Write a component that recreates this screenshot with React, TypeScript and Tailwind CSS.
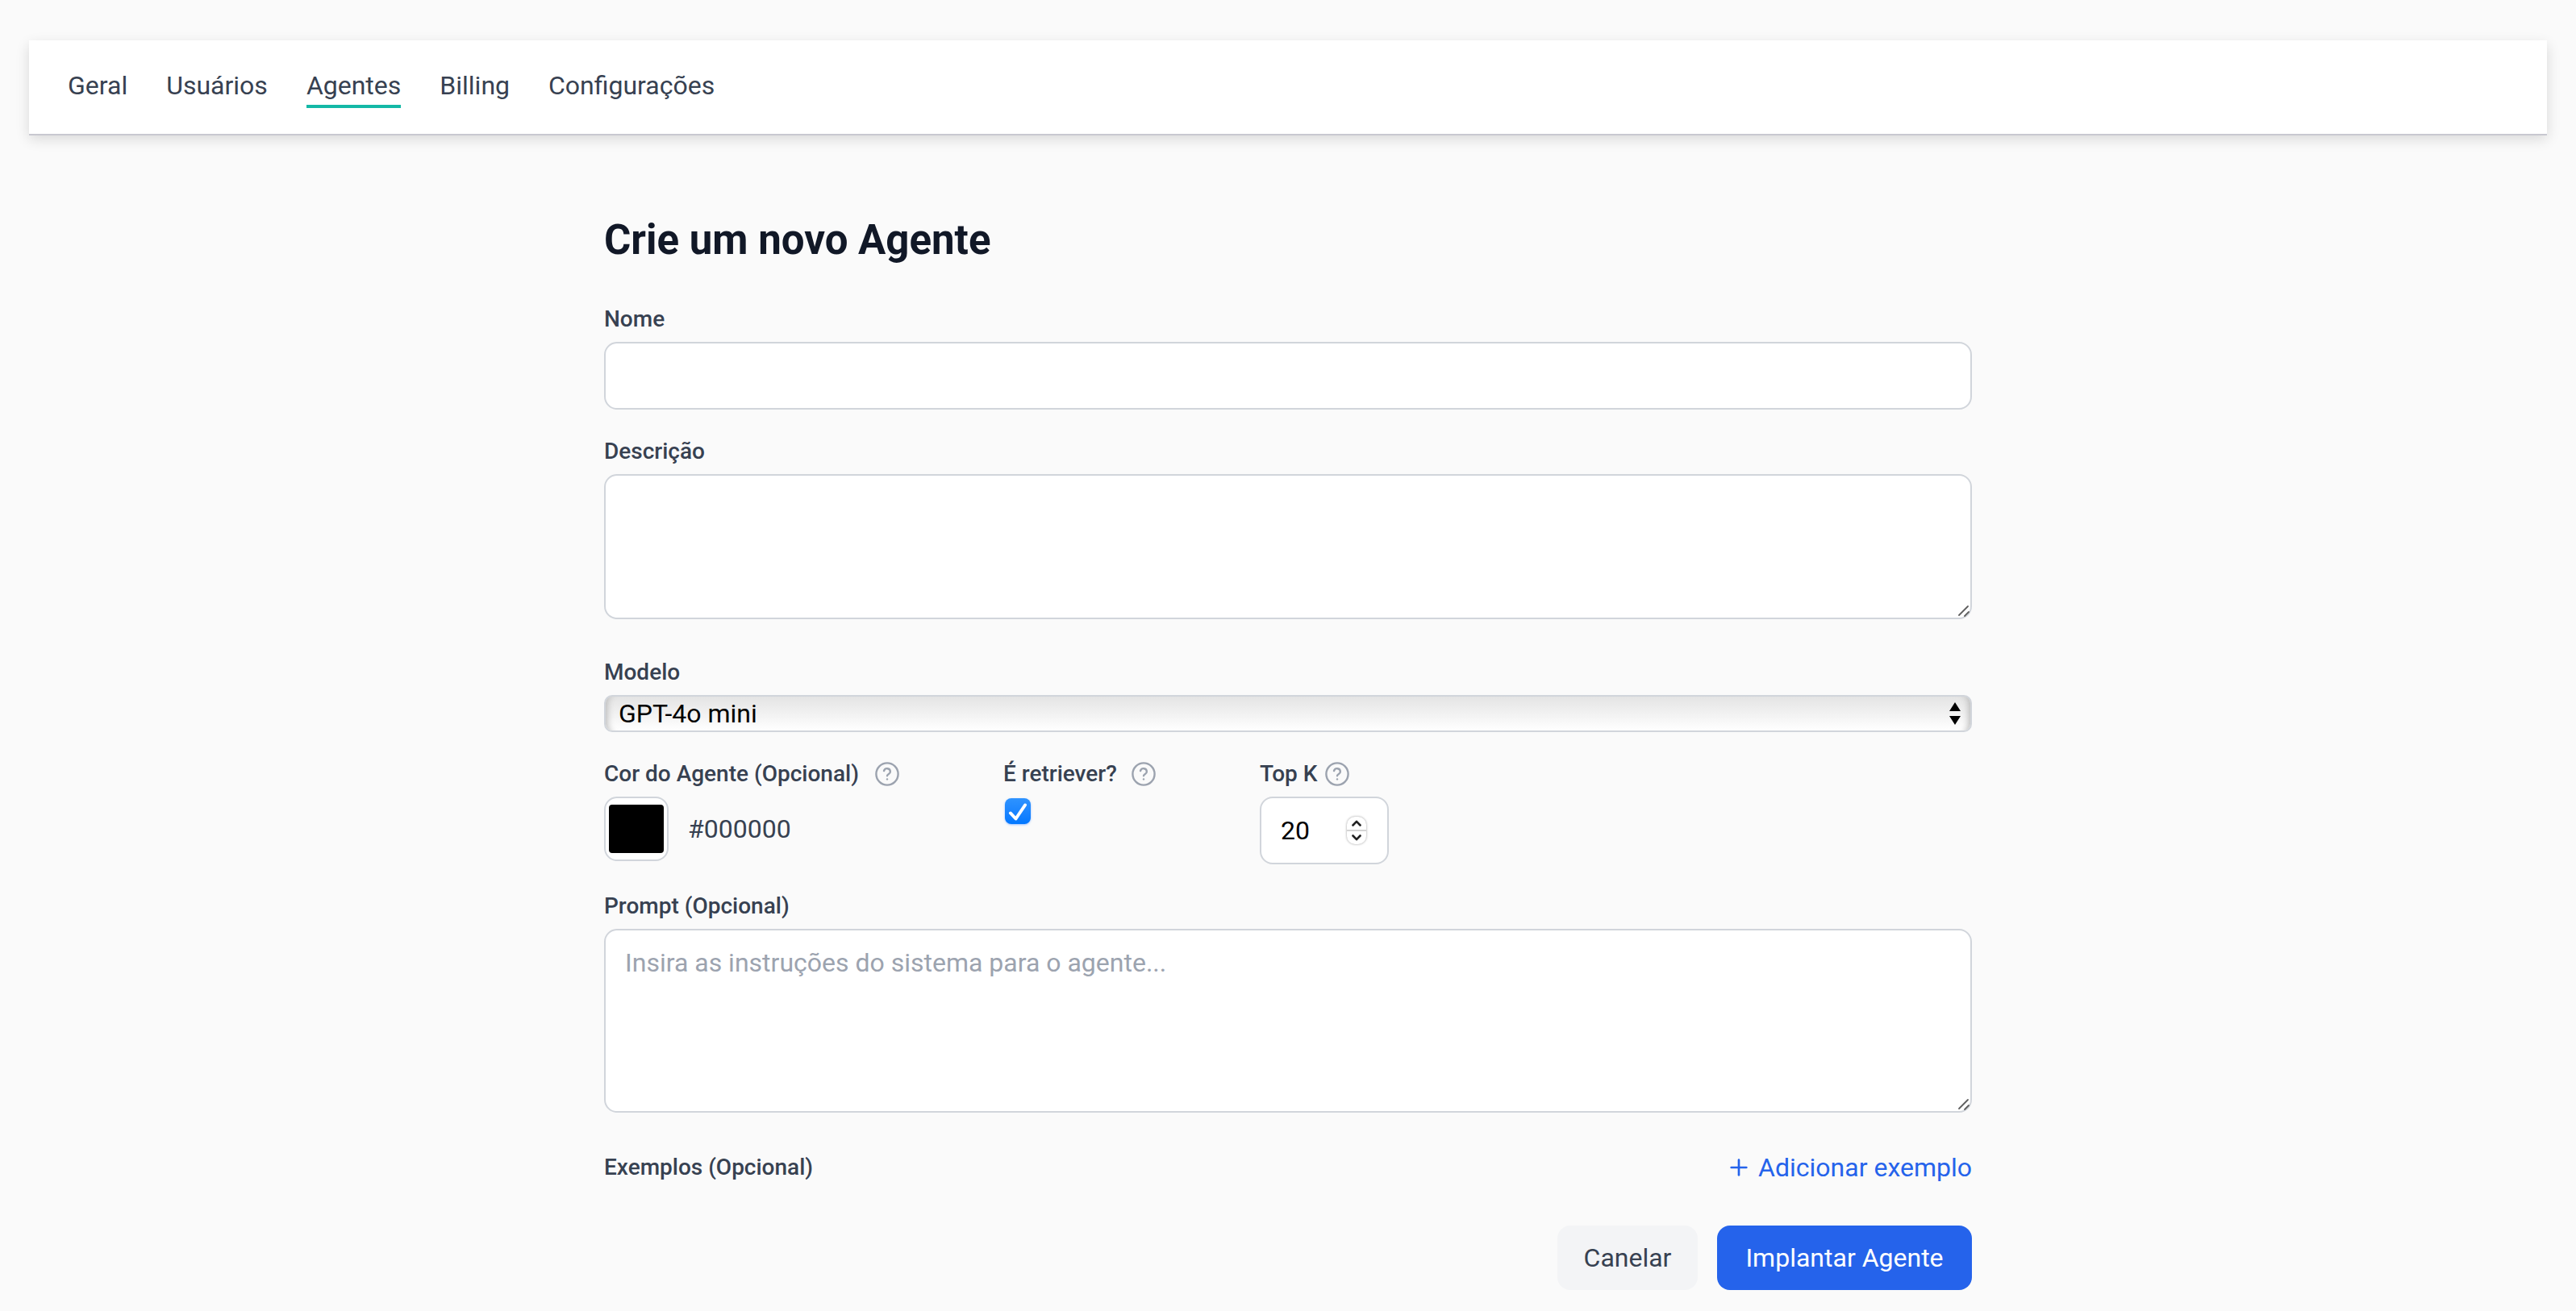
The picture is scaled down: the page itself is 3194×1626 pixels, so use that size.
import React, { useState } from 'react';
import { LuPlus } from 'react-icons/lu';

const tabs = ['Geral', 'Usuários', 'Agentes', 'Billing', 'Configurações'];

const labelClass = 'text-[28px] leading-10 font-medium text-[#374151]';
const fieldClass = 'block w-full rounded-2xl border-2 border-[#d1d5db] bg-white px-6 text-[32px] leading-[48px] text-black';

const HelpIcon: React.FC = () => (
  <svg className="size-8 shrink-0 text-[#9ca3af]" viewBox="0 0 24 24" fill="none" stroke="currentColor" strokeWidth="1.8" strokeLinecap="round" strokeLinejoin="round" aria-hidden="true">
    <circle cx="12" cy="12" r="10.2" />
    <path d="M9 9.1a3 3 0 0 1 5.9.8c0 2-2.9 2.4-2.9 3.7" />
    <path d="M12 16.8h.01" />
  </svg>
);

const ResizeGrip: React.FC = () => (
  <svg className="pointer-events-none absolute right-0.5 bottom-0.5 size-4 text-[#5f5f5f]" viewBox="0 0 16 16" fill="none" stroke="currentColor" strokeWidth="1.8" strokeLinecap="round" aria-hidden="true">
    <path d="M2 13 13 2M9 14l5-5" />
  </svg>
);

const App: React.FC = () => {
  const [form, setForm] = useState({
    name: '',
    description: '',
    model: 'gpt-4o-mini',
    color: '#000000',
    retriever: true,
    topK: 20,
    prompt: '',
  });

  const handleChange = (e: React.ChangeEvent<HTMLInputElement | HTMLTextAreaElement | HTMLSelectElement>) => {
    const { name, value } = e.target;
    setForm(prev => ({ ...prev, [name]: value }));
  };

  const stepTopK = (step: number) => setForm(prev => ({ ...prev, topK: Number(prev.topK) + step }));

  return (
    <div className="min-h-screen bg-[#fafafa] px-9 pt-[50px] pb-6 font-['Roboto',sans-serif]">
      <nav className="flex items-center gap-12 bg-white px-12 py-8 text-[32px] leading-[48px] text-[#374151] shadow-[0_2px_0_#c8c8d0,0_6px_16px_rgba(0,0,0,0.14)]">
        {tabs.map(tab => (
          <a key={tab} href="#" className={tab === 'Agentes' ? 'border-b-4 border-[#14b8a6]' : 'border-b-4 border-transparent'}>
            {tab}
          </a>
        ))}
      </nav>

      <form onSubmit={e => e.preventDefault()} className="mx-auto mt-24 max-w-[1696px]">
        <h1 className="text-[51px] leading-[72px] font-bold text-[#111827]">Crie um novo Agente</h1>

        <div className="mt-[42px]">
          <label htmlFor="name" className={`block ${labelClass}`}>Nome</label>
          <input type="text" id="name" name="name" value={form.name} onChange={handleChange} className={`mt-2 h-[84px] ${fieldClass}`} />
        </div>

        <div className="mt-8">
          <label htmlFor="description" className={`block ${labelClass}`}>Descrição</label>
          <div className="relative mt-2">
            <textarea id="description" name="description" value={form.description} onChange={handleChange} className={`h-[180px] resize-none py-4 ${fieldClass}`} />
            <ResizeGrip />
          </div>
        </div>

        <div className="mt-[46px]">
          <label htmlFor="model" className={`block ${labelClass}`}>Modelo</label>
          <div className="relative mt-2">
            <select
              id="model"
              name="model"
              value={form.model}
              onChange={handleChange}
              className="block h-[46px] w-full appearance-none rounded-[10px] border-2 border-[#d1d5db] bg-linear-to-b from-[#e4e4e4] to-white px-4 text-[32px] leading-10 text-black shadow-[inset_10px_0_8px_-8px_#b8b8b8,inset_-10px_0_8px_-8px_#b8b8b8]"
            >
              <option value="gpt-4o-mini">GPT-4o mini</option>
              <option value="gpt-4o">GPT-4o</option>
            </select>
            <svg className="pointer-events-none absolute top-2 right-3.5 h-[30px] w-3.5" viewBox="0 0 14 30" aria-hidden="true">
              <path d="M7 1l7 11H0zM7 29l7-11H0z" />
            </svg>
          </div>
        </div>

        <div className="mt-8 grid grid-cols-[495px_318px_160px]">
          <div>
            <div className="flex items-center gap-2">
              <label htmlFor="color" className={`min-w-[327px] ${labelClass}`}>Cor do Agente (Opcional)</label>
              <HelpIcon />
            </div>
            <div className="mt-2 flex items-center gap-6">
              <input
                type="color"
                id="color"
                name="color"
                value={form.color}
                onChange={handleChange}
                className="size-20 appearance-none rounded-2xl border-2 border-[#d1d5db] bg-white px-1 py-2 [&::-webkit-color-swatch]:rounded [&::-webkit-color-swatch]:border-0 [&::-webkit-color-swatch-wrapper]:p-0"
              />
              <span className="text-[32px] leading-[48px] text-[#374151]">{form.color}</span>
            </div>
          </div>

          <div>
            <div className="flex items-center gap-2">
              <label htmlFor="retriever" className={`min-w-[150px] ${labelClass}`}>É retriever?</label>
              <HelpIcon />
            </div>
            <div className="relative mt-2.5 ml-0.5 size-8">
              <input
                type="checkbox"
                id="retriever"
                checked={form.retriever}
                onChange={e => setForm(prev => ({ ...prev, retriever: e.target.checked }))}
                className="block size-8 appearance-none rounded-lg border border-[#d1d5db] bg-white shadow-sm checked:border-0 checked:bg-linear-to-b checked:from-[#2e93ff] checked:to-[#0077ff] checked:shadow-blue-500/40"
              />
              {form.retriever && (
                <svg className="pointer-events-none absolute inset-0 size-8" viewBox="0 0 32 32" fill="none" stroke="#fff" strokeWidth="4" strokeLinecap="round" strokeLinejoin="round" aria-hidden="true">
                  <path d="M7 18.5l6.5 7L25 8.5" />
                </svg>
              )}
            </div>
          </div>

          <div>
            <div className="flex items-center gap-2">
              <label htmlFor="topK" className={`min-w-[72px] ${labelClass}`}>Top K</label>
              <HelpIcon />
            </div>
            <div className="relative mt-2">
              <input type="number" id="topK" name="topK" value={form.topK} onChange={handleChange} className={`h-[84px] [appearance:textfield] ${fieldClass}`} />
              <div className="absolute inset-y-0 right-7 flex items-center">
                <div className="flex h-[34px] w-6 flex-col divide-y-2 divide-[#d4d4d4] rounded-[10px] bg-white shadow-[0_0_3px_rgba(0,0,0,0.4)]">
                  <button type="button" aria-label="Aumentar" onClick={() => stepTopK(1)} className="flex flex-1 items-center justify-center">
                    <svg className="h-2 w-3" viewBox="0 0 12 8" fill="none" stroke="#222" strokeWidth="2.6" strokeLinecap="round" strokeLinejoin="round"><path d="M1.5 6.5 6 1.8l4.5 4.7" /></svg>
                  </button>
                  <button type="button" aria-label="Diminuir" onClick={() => stepTopK(-1)} className="flex flex-1 items-center justify-center">
                    <svg className="h-2 w-3" viewBox="0 0 12 8" fill="none" stroke="#222" strokeWidth="2.6" strokeLinecap="round" strokeLinejoin="round"><path d="M1.5 1.5 6 6.2l4.5-4.7" /></svg>
                  </button>
                </div>
              </div>
            </div>
          </div>
        </div>

        <div className="mt-8">
          <label htmlFor="prompt" className={`block ${labelClass}`}>Prompt (Opcional)</label>
          <div className="relative mt-2">
            <textarea
              id="prompt"
              name="prompt"
              value={form.prompt}
              onChange={handleChange}
              placeholder="Insira as instruções do sistema para o agente..."
              className={`h-[228px] resize-none py-4 placeholder:text-[#9ca3af] ${fieldClass}`}
            />
            <ResizeGrip />
          </div>
        </div>

        <div className="mt-11 flex items-center justify-between">
          <h2 className={labelClass}>Exemplos (Opcional)</h2>
          <button type="button" className="flex items-center gap-2 text-[32px] leading-[48px] text-[#2563eb]">
            <LuPlus className="size-8" />
            Adicionar exemplo
          </button>
        </div>

        <div className="mt-12 flex justify-end gap-6 text-[32px] leading-[48px]">
          <button type="button" className="min-w-[174px] rounded-2xl bg-[#f3f4f6] px-4 py-4 text-[#374151]">Canelar</button>
          <button type="submit" className="min-w-[316px] rounded-2xl bg-[#2563eb] px-4 py-4 text-white">Implantar Agente</button>
        </div>
      </form>
    </div>
  );
};

export default App;
